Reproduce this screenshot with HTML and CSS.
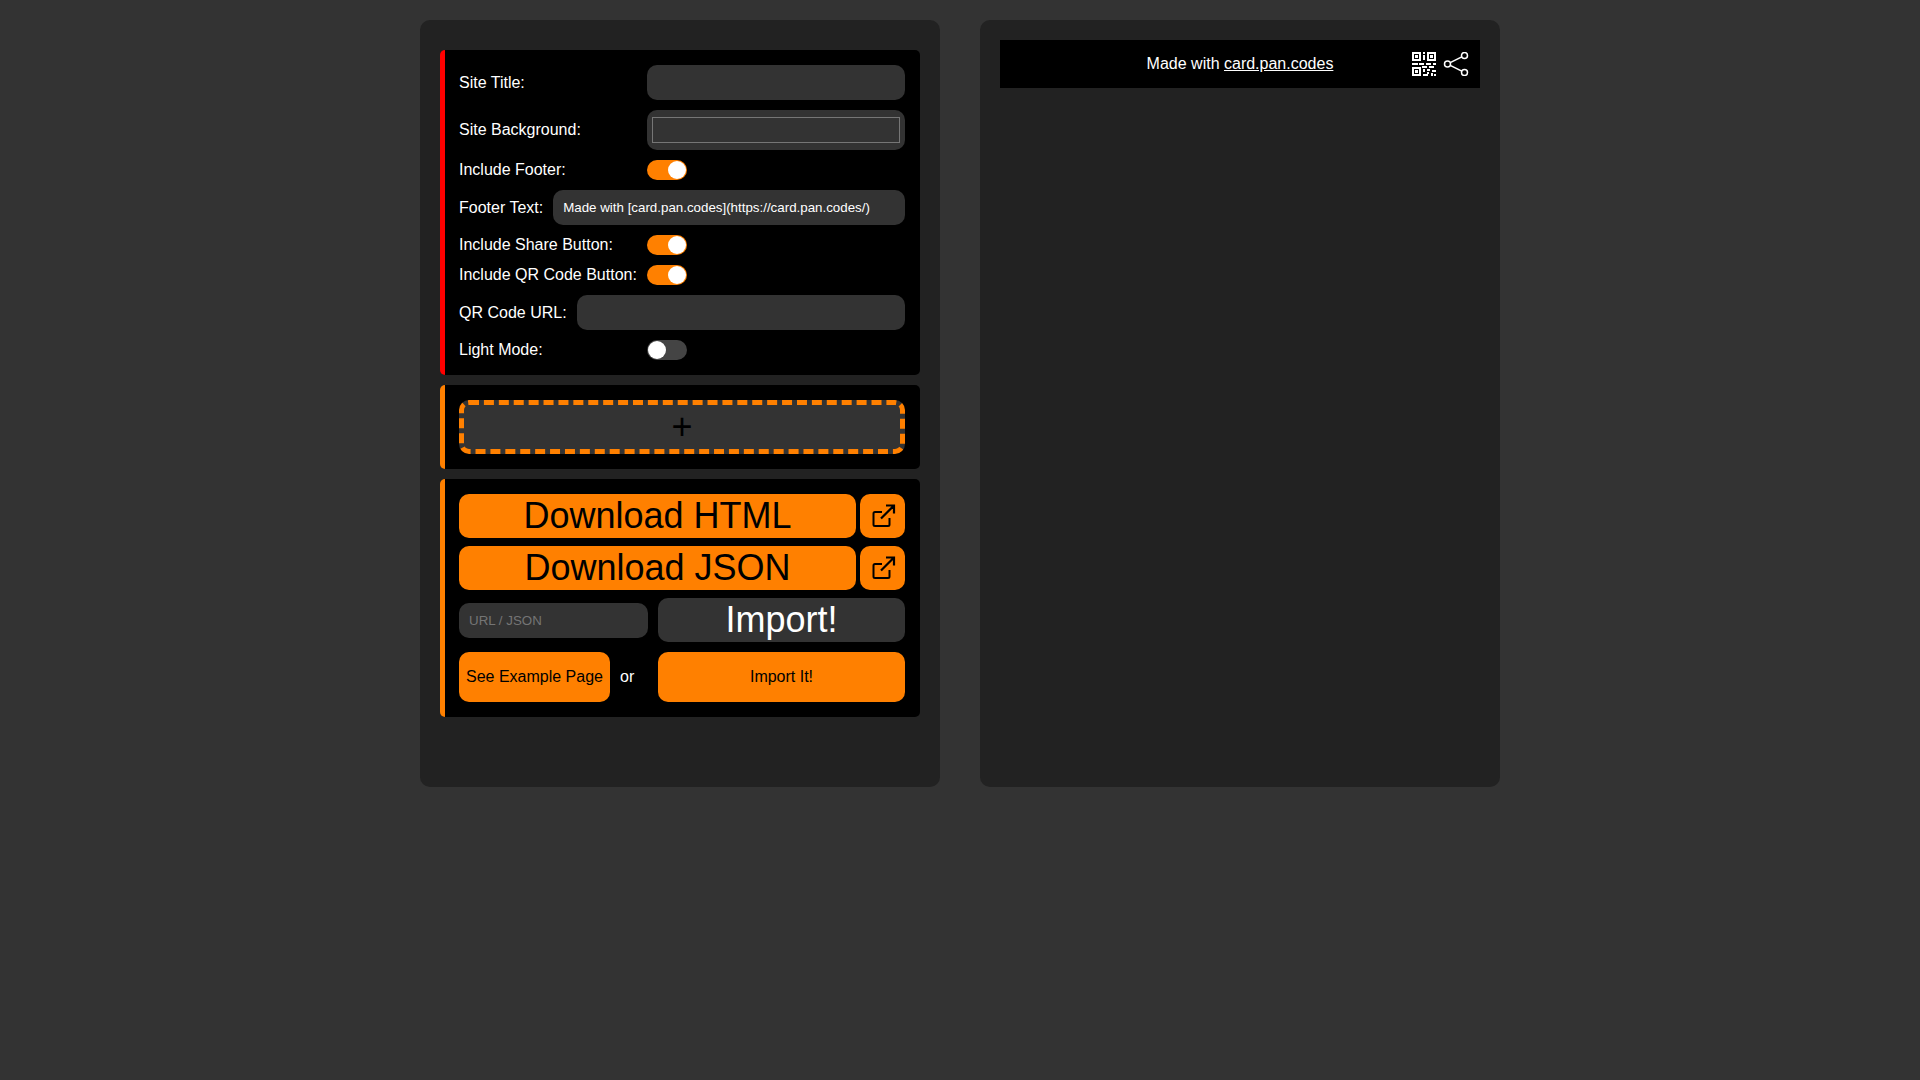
FILE: index.html
```html
<!DOCTYPE html>
<html lang="en">

<head>
    <meta charset="UTF-8">
    <meta name="viewport" content="width=device-width, initial-scale=1.0">
    <title>Card Builder</title>
    <link rel="stylesheet" href="styles.css">
</head>

<body>
    <div class="page">
        <div class="panel">
            <div class="section sectionRed">
                <div class="row row35">
                    <label class="wideLabel">Site Title:</label>
                    <input class="textInput" type="text">
                </div>
                <div class="row">
                    <label class="wideLabel">Site Background:</label>
                    <div class="colorWrap"><div class="colorBox"></div></div>
                </div>
                <div class="row">
                    <label class="wideLabel">Include Footer:</label>
                    <div class="toggle on"><span class="knob"></span></div>
                </div>
                <div class="row">
                    <label>Footer Text:</label>
                    <input class="textInput" type="text" value="Made with [card.pan.codes](https://card.pan.codes/)">
                </div>
                <div class="row">
                    <label class="wideLabel">Include Share Button:</label>
                    <div class="toggle on"><span class="knob"></span></div>
                </div>
                <div class="row">
                    <label class="wideLabel">Include QR Code Button:</label>
                    <div class="toggle on"><span class="knob"></span></div>
                </div>
                <div class="row">
                    <label>QR Code URL:</label>
                    <input class="textInput" type="text">
                </div>
                <div class="row">
                    <label class="wideLabel">Light Mode:</label>
                    <div class="toggle"><span class="knob"></span></div>
                </div>
            </div>

            <div class="section">
                <button class="addBtn">+</button>
            </div>

            <div class="section">
                <div class="downloadRow">
                    <button class="btn bigBtn">Download HTML</button>
                    <button class="btn iconBtn">
                        <svg width="26" height="26" viewBox="0 0 26 26" fill="none" stroke="#000" stroke-width="2">
                            <path d="M12 9H5a1.500 1.500 0 0 0-1.500 1.500V21.500A1.500 1.500 0 0 0 5 23H18a1.500 1.500 0 0 0 1.500-1.500V15" />
                            <path d="M11 15.500L24 2.500M16 2.500h8v8" stroke-width="2.200" />
                        </svg>
                    </button>
                </div>
                <div class="downloadRow">
                    <button class="btn bigBtn">Download JSON</button>
                    <button class="btn iconBtn">
                        <svg width="26" height="26" viewBox="0 0 26 26" fill="none" stroke="#000" stroke-width="2">
                            <path d="M12 9H5a1.500 1.500 0 0 0-1.500 1.500V21.500A1.500 1.500 0 0 0 5 23H18a1.500 1.500 0 0 0 1.500-1.500V15" />
                            <path d="M11 15.500L24 2.500M16 2.500h8v8" stroke-width="2.200" />
                        </svg>
                    </button>
                </div>
                <div class="importGrid">
                    <input class="textInput" type="text" placeholder="URL / JSON">
                    <button class="btn bigBtn darkBtn">Import!</button>
                    <div class="exampleCell">
                        <button class="btn smallBtn exampleBtn">See Example Page</button>
                        <span>or</span>
                    </div>
                    <button class="btn smallBtn">Import It!</button>
                </div>
            </div>
        </div>

        <div class="panel">
            <div class="footer">
                <span>Made with <a href="#">card.pan.codes</a></span>
                <div class="footerIcons">
                    <svg width="24" height="24" viewBox="0 0 24 24" fill="#fff" shape-rendering="crispEdges">
                        <path fill-rule="evenodd" d="M0 0h9v9H0zM2 2v5h5V2zM15 0h9v9h-9zM17 2v5h5V2zM0 15h9v9H0zM2 17v5h5v-5z" />
                        <path d="M3 3h3v3H3zM18 3h3v3h-3zM3 18h3v3H3zM11 0h2v2h-2zM10.500 3h2.500v5h-2.500zM0 10.500h6v2H0zM7 11h5v2H7zM10 14h5v2h-5zM14 10.500h5v2h-5zM21 10.500h3v2h-3zM17 14h5v2h-5zM11 17h2v3h-2zM15 17h3v2h-3zM20 18h4v2h-4zM15 20h2v2h-2zM11 22h5v2h-5zM19 21h2v3h-2zM22 22h2v2h-2z" />
                    </svg>
                    <svg width="26" height="24" viewBox="0 0 26 24" fill="none" stroke="#fff" stroke-width="1.500">
                        <circle cx="4.500" cy="12" r="3" />
                        <circle cx="21.500" cy="3.500" r="3" />
                        <circle cx="21.500" cy="20.500" r="3" />
                        <path d="M7.200 10.700l11.600-5.900M7.200 13.300l11.600 5.900" />
                    </svg>
                </div>
            </div>
        </div>
    </div>
</body>

</html>
```

FILE: styles.css
```css
* {
    box-sizing: border-box;
}

body {
    margin: 0;
    min-height: 100vh;
    background-color: #333;
    color: #fff;
    font-family: "Liberation Sans", Arial, sans-serif;
    font-size: 16px;
}

.page {
    display: flex;
    justify-content: center;
    gap: 40px;
    padding-top: 20px;
}

.panel {
    width: 520px;
    height: 767px;
    padding: 20px;
    border-radius: 10px;
    background-color: #222;
    display: flex;
    flex-direction: column;
    gap: 10px;
}

.panel:first-child {
    padding-top: 30px;
}

.section {
    padding: 15px 15px 15px 14px;
    border-left: 5px solid #ff8000;
    border-radius: 5px;
    background-color: #000;
}

.sectionRed {
    border-left-color: #f00;
    display: flex;
    flex-direction: column;
    gap: 10px;
}

.row {
    display: flex;
    align-items: center;
    gap: 10px;
}

.wideLabel {
    flex: 0 0 178px;
}

.textInput {
    flex: 1;
    min-width: 0;
    width: 100%;
    height: 35px;
    padding: 0 10px;
    border: none;
    border-radius: 10px;
    background-color: #333;
    color: #fff;
    font-family: "Liberation Sans", Arial, sans-serif;
    font-size: 13.333px;
}

.textInput::placeholder {
    color: #757575;
}

.colorWrap {
    flex: 1;
    height: 40px;
    padding: 7px 5px;
    border-radius: 10px;
    background-color: #333;
}

.colorBox {
    height: 26px;
    border: 1px solid #767676;
    background-color: #333;
}

.toggle {
    width: 40px;
    height: 20px;
    padding: 1px;
    border-radius: 10px;
    background-color: #444;
    display: flex;
}

.toggle.on {
    background-color: #ff8000;
    justify-content: flex-end;
}

.knob {
    width: 18px;
    height: 18px;
    border-radius: 50%;
    background-color: #fff;
}

.addBtn {
    display: block;
    width: 100%;
    height: 54px;
    padding: 0;
    border: 5px dashed #ff8000;
    border-radius: 10px;
    background-color: #333;
    color: #000;
    font-family: "Liberation Sans", Arial, sans-serif;
    font-size: 36px;
    line-height: 1;
}

.btn {
    padding: 0;
    border: none;
    border-radius: 10px;
    background-color: #ff8000;
    color: #000;
    font-family: "Liberation Sans", Arial, sans-serif;
}

.downloadRow {
    display: flex;
    gap: 4px;
    margin-bottom: 8px;
}

.bigBtn {
    flex: 1;
    height: 44px;
    font-size: 36px;
}

.iconBtn {
    flex: 0 0 45px;
    height: 44px;
    display: flex;
    align-items: center;
    justify-content: center;
}

.importGrid {
    display: grid;
    grid-template-columns: 189px 1fr;
    gap: 10px;
    align-items: center;
}

.darkBtn {
    background-color: #333;
    color: #fff;
}

.exampleCell {
    display: flex;
    align-items: center;
    gap: 10px;
}

.smallBtn {
    height: 50px;
    font-size: 16px;
}

.exampleBtn {
    flex: 0 0 151px;
}

.footer {
    position: relative;
    height: 48px;
    background-color: #000;
    display: flex;
    align-items: center;
    justify-content: center;
}

.footer a {
    color: #fff;
}

.footerIcons {
    position: absolute;
    top: 12px;
    right: 11px;
    display: flex;
    gap: 7px;
}
```
